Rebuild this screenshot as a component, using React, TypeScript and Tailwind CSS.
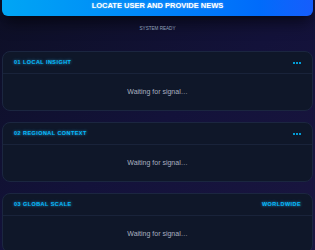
const panels = [
  { title: "01 LOCAL INSIGHT", tag: null },
  { title: "02 REGIONAL CONTEXT", tag: null },
  { title: "03 GLOBAL SCALE", tag: "WORLDWIDE" },
];

function Dots() {
  return (
    <div className="flex items-center gap-[1px]">
      {[1, 2, 3].map((i) => (
        <div key={i} className="w-[2px] h-[2px] bg-sky-400/80"></div>
      ))}
    </div>
  );
}

function Panel({ title, tag }: { title: string; tag: string | null }) {
  return (
    <div className="rounded-lg border border-[#1b2640] bg-[#0f1729] overflow-hidden">
      <div className="h-[22px] flex items-center justify-between px-[11px] border-b border-[#19233a]">
        <span className="text-[5.5px] font-bold tracking-[0.08em] text-sky-400 [text-shadow:0_0_3px_rgba(56,189,248,0.8)]">
          {title}
        </span>
        {tag ? (
          <span className="text-[5.5px] font-bold tracking-[0.08em] text-sky-400 [text-shadow:0_0_3px_rgba(56,189,248,0.8)]">
            {tag}
          </span>
        ) : (
          <Dots />
        )}
      </div>
      <div className="h-[36px] flex items-center justify-center">
        <span className="text-[7px] text-[#a9b1c0]">Waiting for signal…</span>
      </div>
    </div>
  );
}

export default function App() {
  return (
    <div
      className="min-h-screen w-full overflow-hidden flex flex-col bg-gradient-to-br from-[#0d0f25] via-[#13123a] to-[#1a1640] px-[2px]"
      style={{ fontFamily: '"Liberation Sans", Arial, sans-serif' }}
    >
      <button className="block w-full h-[21px] -mt-[5px] rounded-md bg-gradient-to-r from-sky-500 to-blue-600 text-white text-[7.5px] font-bold leading-none shadow-lg shadow-black/50 pt-[1px] [text-shadow:0_0_2px_rgba(255,255,255,0.5)]">
        LOCATE USER AND PROVIDE NEWS
      </button>
      <p className="mt-[10px] text-center text-[4.6px] leading-[6px] text-slate-400">SYSTEM READY</p>
      <div className="mt-[19px] flex flex-col gap-[11px]">
        {panels.map((p) => (
          <Panel key={p.title} title={p.title} tag={p.tag} />
        ))}
      </div>
    </div>
  );
}
